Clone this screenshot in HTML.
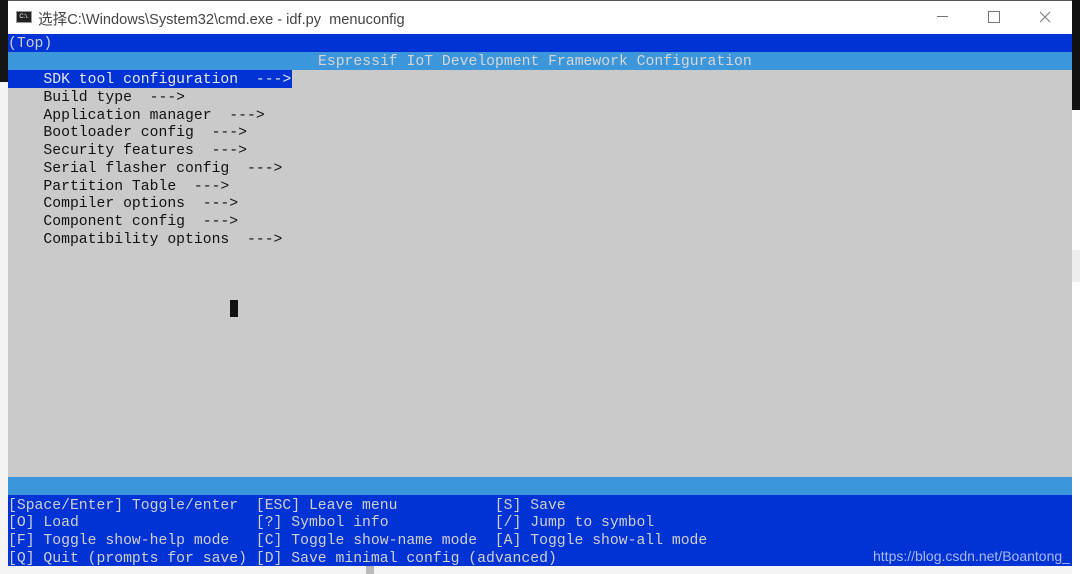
<!DOCTYPE html><html><head><meta charset="utf-8"><style>
body{margin:0;width:1080px;height:574px;overflow:hidden;background:#f4f4f4;position:relative;font-family:"Liberation Mono",monospace}
.a{position:absolute}
.t{position:absolute;left:8px;font-size:14.75px;line-height:17.75px;height:17.75px;white-space:pre;color:#111;margin-top:2px}
</style></head><body>
<div class="a" style="left:0;top:0;width:8px;height:82px;background:#141414"></div>
<div class="a" style="left:1072px;top:0;width:8px;height:110px;background:#111"></div>
<div class="a" style="left:1072px;top:110px;width:8px;height:464px;background:#fff"></div>
<div class="a" style="left:1072px;top:250px;width:8px;height:32px;background:#eee"></div>
<div class="a" style="left:8px;top:0;width:1064px;height:34px;background:#fff;border-top:1px solid #555;box-sizing:border-box"></div>
<div class="a" style="left:16px;top:11px;width:16px;height:12px;background:#222;border:1px solid #999;box-sizing:border-box;color:#fff;font:6px 'Liberation Sans';line-height:10px;text-align:center">C:\.</div>
<div class="a" style="left:38px;top:8px;font:14.6px 'Liberation Sans','Noto Sans CJK SC',sans-serif;color:#444;white-space:pre">选择C:\Windows\System32\cmd.exe - idf.py  menuconfig</div>
<div class="a" style="left:937px;top:16px;width:11px;height:1px;background:#777"></div>
<div class="a" style="left:988px;top:11px;width:10px;height:10px;border:1px solid #777"></div>
<svg class="a" style="left:1039px;top:11px" width="12" height="12"><path d="M1 1L11 11M11 1L1 11" stroke="#777" stroke-width="1"/></svg>
<div class="a" style="left:8px;top:34px;width:1064px;height:18px;background:#0033d6"></div>
<div class="a" style="left:8px;top:52px;width:1064px;height:18px;background:#3c96dc"></div>
<div class="a" style="left:8px;top:70px;width:1064px;height:407px;background:#cacaca"></div>
<div class="a" style="left:8px;top:477px;width:1064px;height:18px;background:#3c96dc"></div>
<div class="a" style="left:8px;top:495px;width:1064px;height:71px;background:#0033d6"></div>
<div class="a" style="left:8px;top:70px;width:284px;height:17.75px;background:#0033d6"></div>
<div class="a" style="left:230px;top:300px;width:8px;height:17px;background:#111"></div>
<div class="t" style="top:34px;color:#d0d0d0">(Top)</div>
<div class="t" style="top:52px;left:318px;color:#d6d6d6">Espressif IoT Development Framework Configuration</div>
<div class="t" style="top:70px;color:#e8e8e8">    SDK tool configuration  ---></div>
<div class="t" style="top:87.75px">    Build type  ---></div>
<div class="t" style="top:105.5px">    Application manager  ---></div>
<div class="t" style="top:123.25px">    Bootloader config  ---></div>
<div class="t" style="top:141px">    Security features  ---></div>
<div class="t" style="top:158.75px">    Serial flasher config  ---></div>
<div class="t" style="top:176.5px">    Partition Table  ---></div>
<div class="t" style="top:194.25px">    Compiler options  ---></div>
<div class="t" style="top:212px">    Component config  ---></div>
<div class="t" style="top:229.75px">    Compatibility options  ---></div>
<div class="t" style="top:495.5px;color:#d0d0d0">[Space/Enter] Toggle/enter  [ESC] Leave menu           [S] Save</div>
<div class="t" style="top:513.25px;color:#d0d0d0">[O] Load                    [?] Symbol info            [/] Jump to symbol</div>
<div class="t" style="top:531px;color:#d0d0d0">[F] Toggle show-help mode   [C] Toggle show-name mode  [A] Toggle show-all mode</div>
<div class="t" style="top:548.75px;color:#d0d0d0">[Q] Quit (prompts for save) [D] Save minimal config (advanced)</div>
<div class="a" style="left:873px;top:548px;font:14px 'Liberation Sans',sans-serif;color:#aab8e8">https://blog.csdn.net/Boantong_</div>
<div class="a" style="left:366px;top:566px;width:8px;height:8px;background:#bbb"></div>
</body></html>
